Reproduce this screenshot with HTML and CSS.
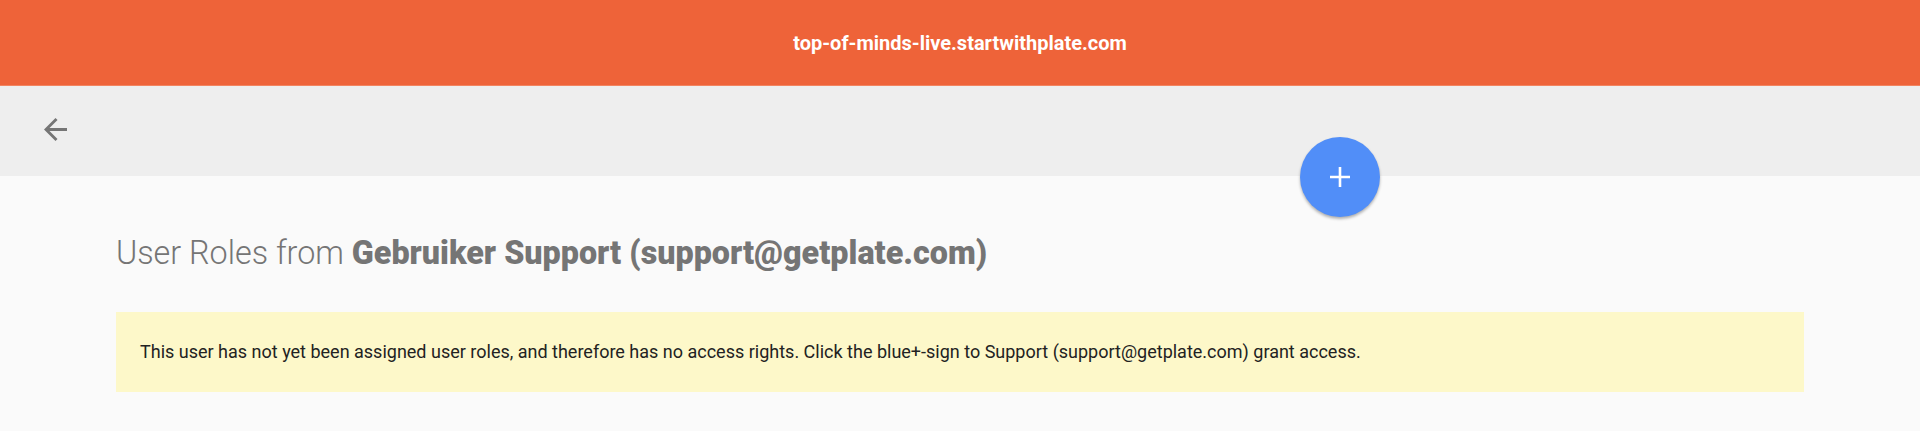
FILE: index.html
```html
<!DOCTYPE html>
<html lang="en">
<head>
  <meta charset="UTF-8">
  <title>User Roles</title>
  <link rel="stylesheet" href="styles.css">
</head>
<body>
  <!-- Site bar -->
  <header class="site-bar">top-of-minds-live.startwithplate.com</header>

  <!-- Toolbar with back button and add button -->
  <div class="toolbar">
    <button class="back-btn" title="Back">
      <svg width="23" height="23" viewBox="4 4 16 16"><path d="M20 11H7.83l5.59-5.59L12 4l-8 8 8 8 1.41-1.41L7.83 13H20v-2z" fill="#757575"/></svg>
    </button>
    <button class="fab" title="Add role">
      <svg width="20" height="20" viewBox="0 0 20 20"><path d="M10 0v20M0 10h20" stroke="#fff" stroke-width="2.6"/></svg>
    </button>
  </div>

  <!-- Content -->
  <main class="content">
    <h1 class="page-title"><span class="light">User Roles from </span><b>Gebruiker Support (support@getplate.com)</b></h1>
    <div class="notice">This user has not yet been assigned user roles, and therefore has no access rights. Click the blue+-sign to Support (support@getplate.com) grant access.</div>
  </main>
</body>
</html>
```

FILE: styles.css
```css
body {
  margin: 0;
  background: #fafafa;
  font-family: Roboto, "Liberation Sans", sans-serif;
  height: 431px;
  overflow: hidden;
}

.site-bar {
  height: 85px;
  background: #ee6339;
  border-bottom: 1px solid #f28460;
  color: white;
  font-weight: bold;
  font-size: 20px;
  display: flex;
  align-items: center;
  justify-content: center;
}

.toolbar {
  height: 90px;
  background: #eeeeee;
  position: relative;
  display: flex;
  align-items: center;
  padding-left: 44px;
}

.back-btn {
  background: none;
  border: none;
  padding: 0;
  margin-top: -3px;
  display: flex;
  cursor: pointer;
}

.fab {
  position: absolute;
  left: 1300px;
  top: 51px;
  width: 80px;
  height: 80px;
  border-radius: 50%;
  border: none;
  background: #518ef8;
  box-shadow: 0 2px 3px rgba(0,0,0,0.3);
  display: flex;
  align-items: center;
  justify-content: center;
  cursor: pointer;
  z-index: 10;
}

.content {
  padding: 59px 116px 0 116px;
}

.page-title {
  margin: 0 0 39px 0;
  font-size: 32.3px;
  color: #757575;
  font-weight: bold;
  line-height: 37.5px;
}

.page-title .light {
  font-weight: 300;
}

.notice {
  background: #fdf8c9;
  padding: 29px 24px;
  font-size: 18px;
  line-height: 22px;
  color: #222;
}
```
